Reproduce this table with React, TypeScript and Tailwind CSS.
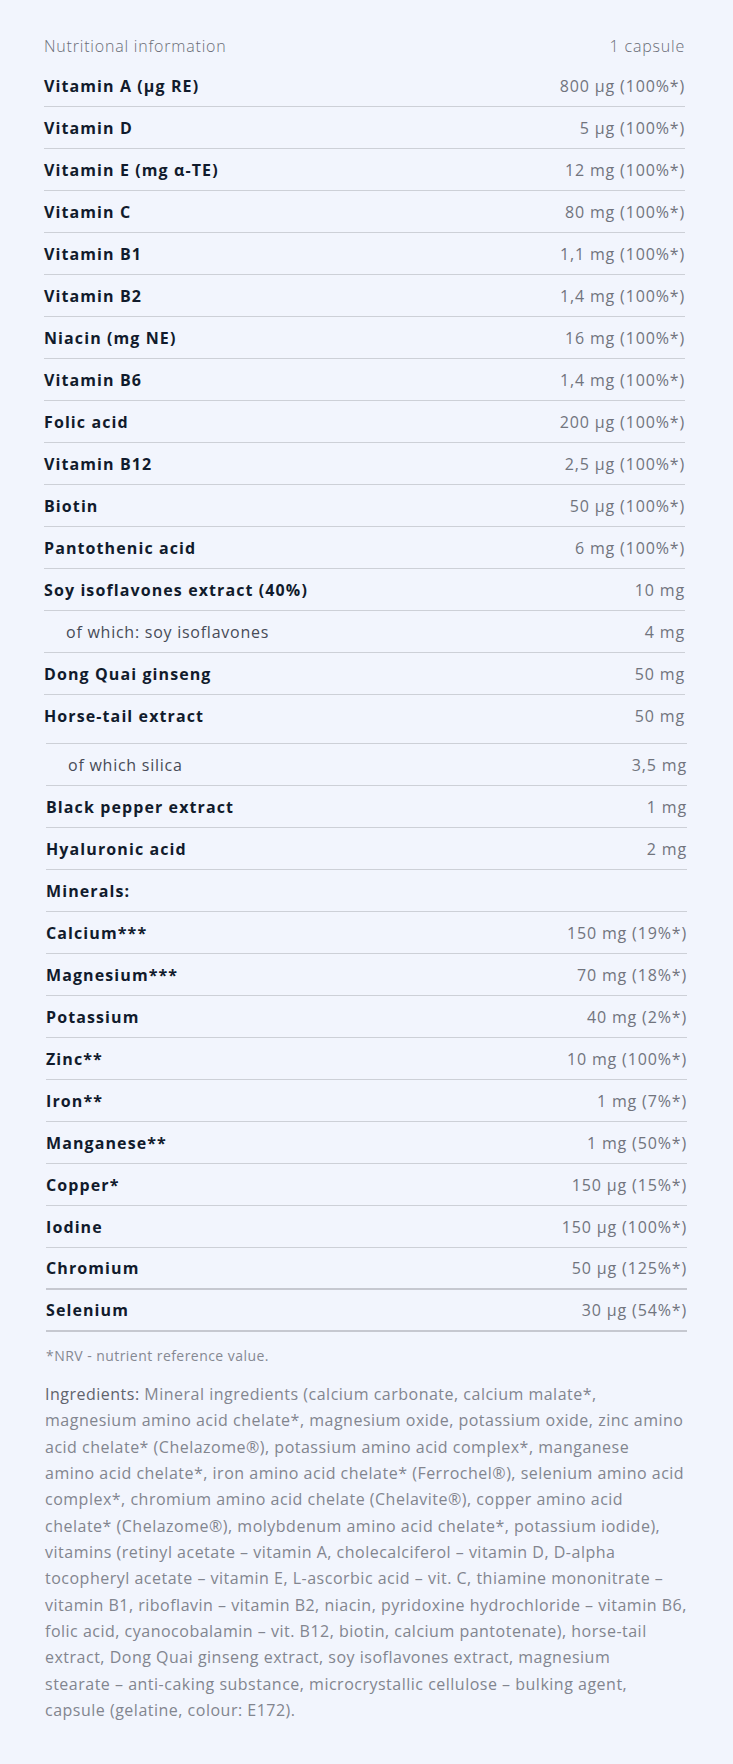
import React from "react";

type Row = { name: string; value: string; indent?: boolean; thick?: boolean; noBorder?: boolean };

const table1: Row[] = [
  { name: "Vitamin A (µg RE)", value: "800 µg (100%*)" },
  { name: "Vitamin D", value: "5 µg (100%*)" },
  { name: "Vitamin E (mg α-TE)", value: "12 mg (100%*)" },
  { name: "Vitamin C", value: "80 mg (100%*)" },
  { name: "Vitamin B1", value: "1,1 mg (100%*)" },
  { name: "Vitamin B2", value: "1,4 mg (100%*)" },
  { name: "Niacin (mg NE)", value: "16 mg (100%*)" },
  { name: "Vitamin B6", value: "1,4 mg (100%*)" },
  { name: "Folic acid", value: "200 µg (100%*)" },
  { name: "Vitamin B12", value: "2,5 µg (100%*)" },
  { name: "Biotin", value: "50 µg (100%*)" },
  { name: "Pantothenic acid", value: "6 mg (100%*)" },
  { name: "Soy isoflavones extract (40%)", value: "10 mg" },
  { name: "of which: soy isoflavones", value: "4 mg", indent: true },
  { name: "Dong Quai ginseng", value: "50 mg" },
  { name: "Horse-tail extract", value: "50 mg", noBorder: true },
];

const table2: Row[] = [
  { name: "of which silica", value: "3,5 mg", indent: true },
  { name: "Black pepper extract", value: "1 mg" },
  { name: "Hyaluronic acid", value: "2 mg" },
  { name: "Minerals:", value: "" },
  { name: "Calcium***", value: "150 mg (19%*)" },
  { name: "Magnesium***", value: "70 mg (18%*)" },
  { name: "Potassium", value: "40 mg (2%*)" },
  { name: "Zinc**", value: "10 mg (100%*)" },
  { name: "Iron**", value: "1 mg (7%*)" },
  { name: "Manganese**", value: "1 mg (50%*)" },
  { name: "Copper*", value: "150 µg (15%*)" },
  { name: "Iodine", value: "150 µg (100%*)" },
  { name: "Chromium", value: "50 µg (125%*)", thick: true },
  { name: "Selenium", value: "30 µg (54%*)", thick: true },
];

const ingredients = [
  "Mineral ingredients (calcium carbonate, calcium malate*,",
  "magnesium amino acid chelate*, magnesium oxide, potassium oxide, zinc amino",
  "acid chelate* (Chelazome®), potassium amino acid complex*, manganese",
  "amino acid chelate*, iron amino acid chelate* (Ferrochel®), selenium amino acid",
  "complex*, chromium amino acid chelate (Chelavite®), copper amino acid",
  "chelate* (Chelazome®), molybdenum amino acid chelate*, potassium iodide),",
  "vitamins (retinyl acetate – vitamin A, cholecalciferol – vitamin D, D-alpha",
  "tocopheryl acetate – vitamin E, L-ascorbic acid – vit. C, thiamine mononitrate –",
  "vitamin B1, riboflavin – vitamin B2, niacin, pyridoxine hydrochloride – vitamin B6,",
  "folic acid, cyanocobalamin – vit. B12, biotin, calcium pantotenate), horse-tail",
  "extract, Dong Quai ginseng extract, soy isoflavones extract, magnesium",
  "stearate – anti-caking substance, microcrystallic cellulose – bulking agent,",
  "capsule (gelatine, colour: E172).",
];

function TableRow({ r }: { r: Row }) {
  const border = r.noBorder ? "" : r.thick ? "border-b-2 border-[#c6c8d0]" : "border-b border-[#cdd0d7]";
  return (
    <div className={`flex h-[42px] items-center justify-between ${border}`}>
      {r.indent ? (
        <span className="pl-[22px] text-[16px] font-normal tracking-[0.75px] text-[#474b57]">{r.name}</span>
      ) : (
        <span className="text-[16px] font-bold tracking-[1.1px] text-[#111b2c]">{r.name}</span>
      )}
      <span className="text-[16px] font-normal tracking-[0.85px] text-[#71747d]">{r.value}</span>
    </div>
  );
}

export default function App() {
  return (
    <div
      className="min-h-[1764px] w-full bg-[#f2f5fd] pl-[44px] pr-[48px] pt-[27px] pb-[37px] leading-[24px]"
      style={{ fontFamily: '"Open Sans", "Noto Sans", sans-serif' }}
    >
      <div>
        <div className="flex h-[38px] items-center justify-between">
          <span className="text-[16px] font-light tracking-[0.8px] text-[#6a6d77]">Nutritional information</span>
          <span className="text-[16px] font-light tracking-[0.8px] text-[#6a6d77]">1 capsule</span>
        </div>
        {table1.map((r) => (
          <TableRow key={r.name} r={r} />
        ))}
      </div>
      <div className="ml-[2px] mr-[-2px] mt-[6px] border-t border-[#cdd0d7]">
        {table2.map((r) => (
          <TableRow key={r.name} r={r} />
        ))}
      </div>
      <p className="ml-[2px] mt-[14px] text-[14px] leading-[20px] font-normal tracking-[0.45px] text-[#858892]">
        *NRV - nutrient reference value.
      </p>
      <p className="ml-[1px] mt-[15px] text-[16px] leading-[26.35px] font-normal tracking-[0.5px] text-[#82858f]">
        <span className="text-[#5f636c]">Ingredients:</span>{" "}
        {ingredients.map((l, i) => (
          <React.Fragment key={i}>
            <span className="whitespace-nowrap">{l}</span>
            {i < ingredients.length - 1 && <br />}
          </React.Fragment>
        ))}
      </p>
    </div>
  );
}
